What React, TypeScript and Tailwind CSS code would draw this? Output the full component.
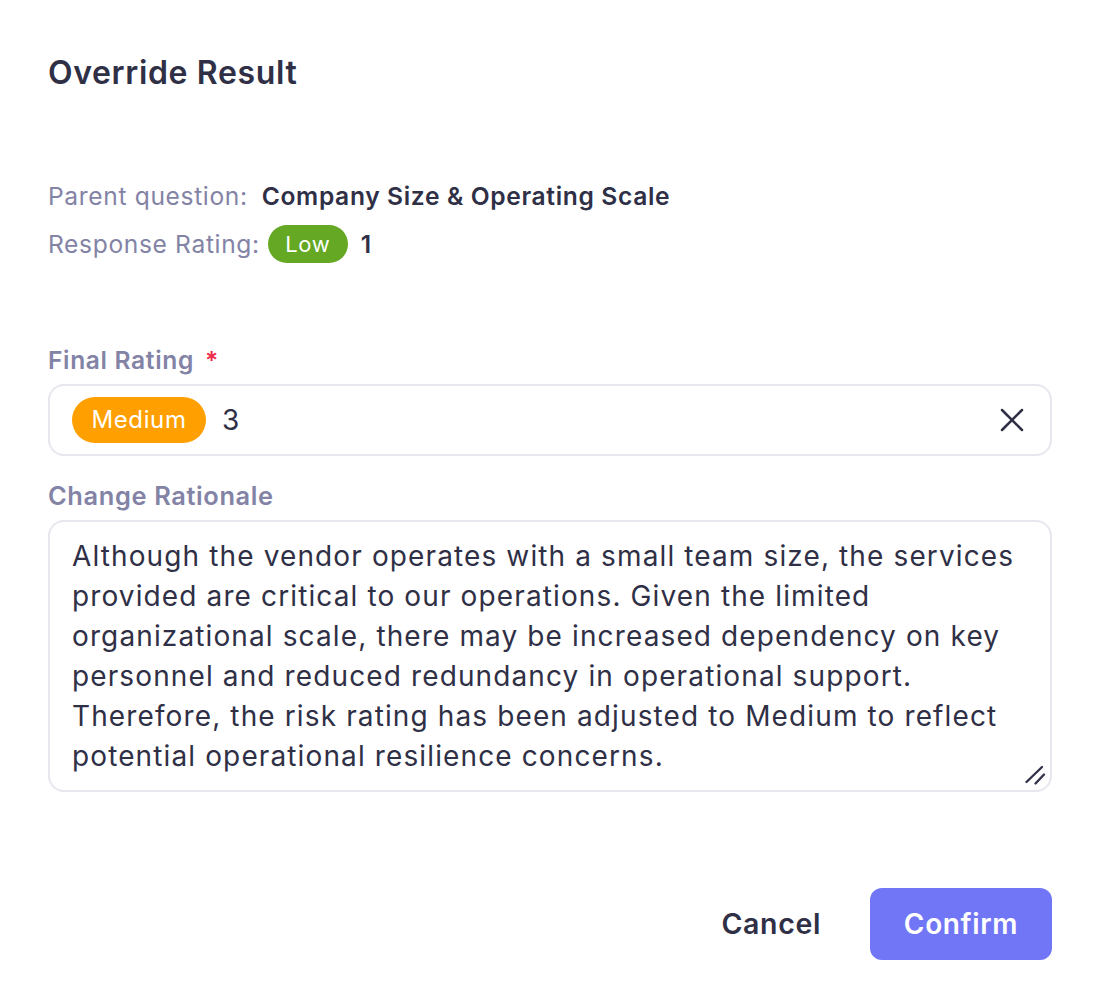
import React, { useState } from 'react'
import { X } from 'lucide-react'

const RATIONALE =
  'Although the vendor operates with a small team size, the services provided are critical to our operations. Given the limited organizational scale, there may be increased dependency on key personnel and reduced redundancy in operational support. Therefore, the risk rating has been adjusted to Medium to reflect potential operational resilience concerns.'

const FONT = { fontFamily: 'Inter, "Open Sans", sans-serif' }

export default function App() {
  const [rationale, setRationale] = useState(RATIONALE)

  return (
    <div
      className="min-h-[1008px] w-[1100px] bg-white px-12 pt-[52px] tracking-[0.04em] text-[#2f2f46]"
      style={FONT}
    >
      {/* Title */}
      <h2 className="text-[32px] font-semibold leading-[42px]">Override Result</h2>

      {/* Summary */}
      <div className="mt-[83px] flex flex-col gap-[10px] text-[24.6px]">
        <div className="flex h-[38px] items-center">
          <span className="text-[#8383a6]">Parent question:</span>
          <span className="ml-[14px] font-semibold">Company Size &amp; Operating Scale</span>
        </div>
        <div className="flex h-[38px] items-center">
          <span className="text-[#8383a6]">Response Rating:</span>
          <span className="ml-[8px] flex h-[38px] w-[80px] items-center justify-center rounded-full bg-[#64a823] text-[22px] text-white">
            Low
          </span>
          <span className="ml-[13px] font-semibold">1</span>
        </div>
      </div>

      {/* Final rating */}
      <div className="mt-[82px]">
        <label className="flex h-[30px] items-center gap-[11px] text-[24.6px] font-semibold text-[#8383a6]">
          Final Rating <span className="text-[#ee2b4c]">*</span>
        </label>
        <div className="mt-[9px] flex h-[72px] items-center rounded-[16px] border-2 border-[#e7e7ef] pl-[22px] pr-[18px]">
          <span className="flex h-[46px] w-[134px] items-center justify-center rounded-full bg-[#ff9f00] text-[24px] text-white">
            Medium
          </span>
          <span className="ml-[16px] text-[28px]">3</span>
          <button className="ml-auto text-[#2f2f46]">
            <X size={40} strokeWidth={1.5} />
          </button>
        </div>
      </div>

      {/* Rationale */}
      <div className="mt-[25px]">
        <label className="flex h-[30px] items-center text-[25.4px] font-semibold text-[#8383a6]">Change Rationale</label>
        <div className="relative mt-[9px]">
          <textarea
            value={rationale}
            onChange={(e) => setRationale(e.target.value)}
            className="block h-[272px] w-full resize-none rounded-[16px] border-2 border-[#e7e7ef] pl-[22px] pr-[10px] pt-[14px] text-[28px] leading-[40px] tracking-[0.04em] text-[#2f2f46] outline-none"
            style={FONT}
          />
          {/* resize grip */}
          <svg
            className="pointer-events-none absolute bottom-[6px] right-[6px]"
            width="24"
            height="24"
            viewBox="0 0 24 24"
            fill="none"
            stroke="#33334a"
            strokeWidth="2.4"
            strokeLinecap="round"
          >
            <path d="M4.5 20 L20 5" />
            <path d="M13.5 21.5 L22 12.5" />
          </svg>
        </div>
      </div>

      {/* Actions */}
      <div className="mt-[96px] flex items-center justify-end gap-[49px]">
        <button className="text-[28.5px] font-semibold text-[#2f2f46]">Cancel</button>
        <button className="h-[72px] w-[182px] rounded-[12px] bg-[#7176f7] text-[28px] font-semibold text-white">
          Confirm
        </button>
      </div>
    </div>
  )
}
